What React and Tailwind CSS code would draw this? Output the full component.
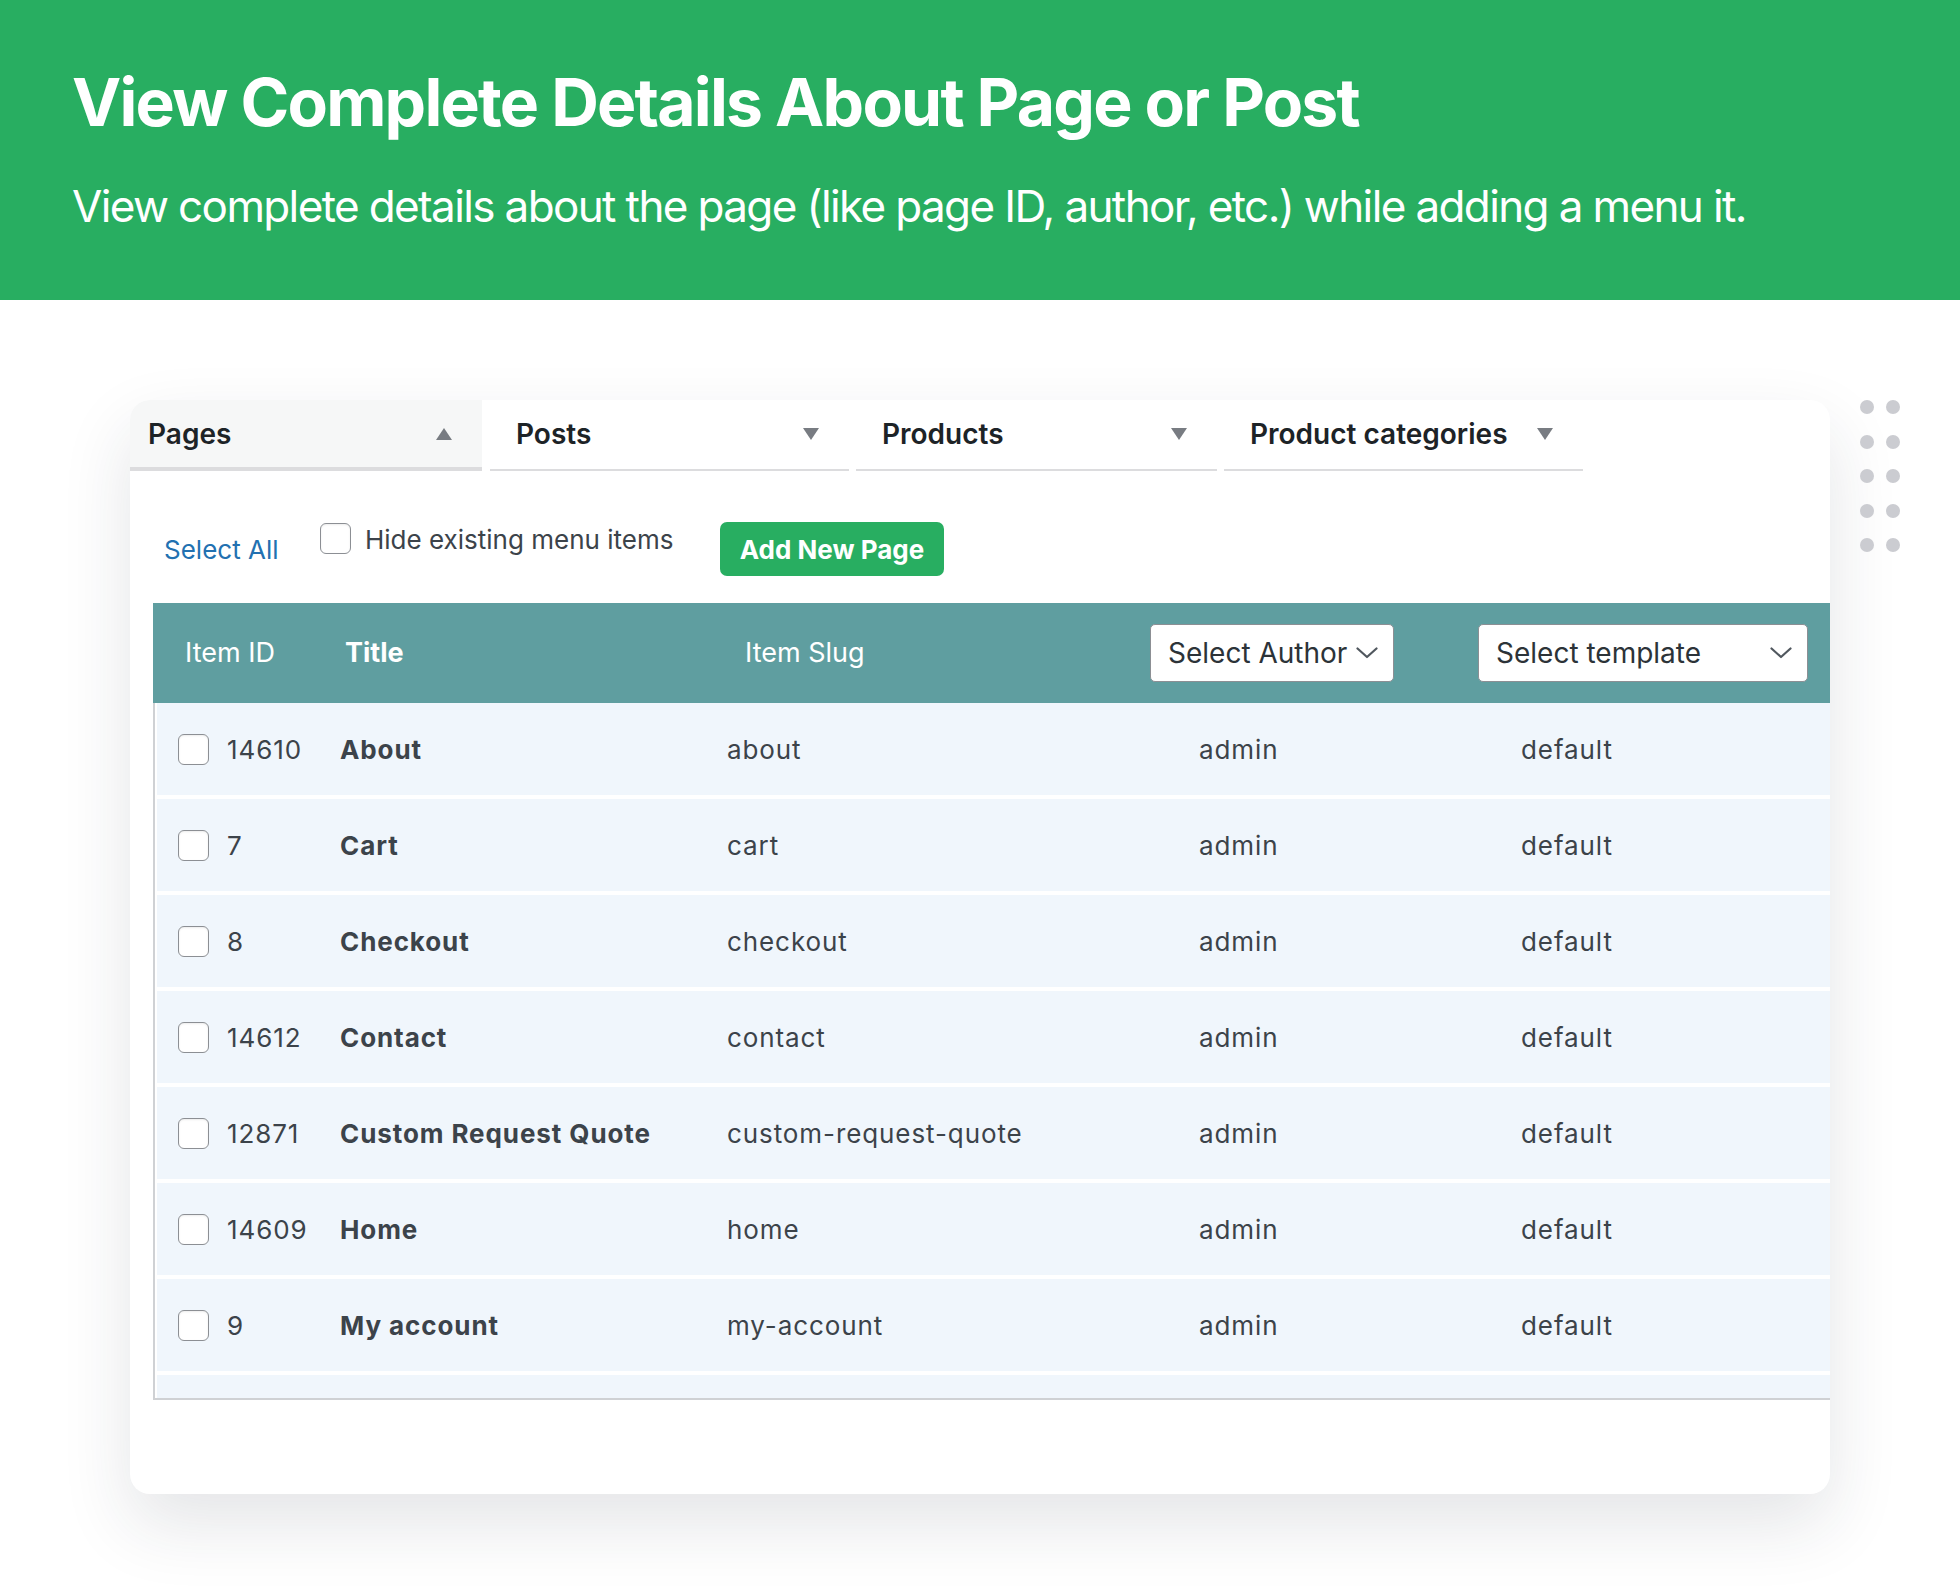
import React from 'react';

const tabs = [
  { label: 'Pages', open: true, width: 'w-[352px]' },
  { label: 'Posts', width: 'w-[359px] ml-[8px]' },
  { label: 'Products', width: 'w-[361px] ml-[7px]' },
  { label: 'Product categories', width: 'w-[359px] ml-[7px]' },
];

const pages = [
  { id: '14610', title: 'About', slug: 'about' },
  { id: '7', title: 'Cart', slug: 'cart' },
  { id: '8', title: 'Checkout', slug: 'checkout' },
  { id: '14612', title: 'Contact', slug: 'contact' },
  { id: '12871', title: 'Custom Request Quote', slug: 'custom-request-quote' },
  { id: '14609', title: 'Home', slug: 'home' },
  { id: '9', title: 'My account', slug: 'my-account' },
];

const Caret = ({ up }) => (
  <svg width="16" height="12" viewBox="0 0 16 12" className="shrink-0">
    <polygon points={up ? '8,0 16,12 0,12' : '0,0 16,0 8,12'} fill="#787c82" />
  </svg>
);

const Chevron = () => (
  <svg width="22" height="12" viewBox="0 0 22 12" fill="none" className="shrink-0">
    <polyline points="1.5,1.5 11,10 20.5,1.5" stroke="#50575e" strokeWidth="2.2" strokeLinecap="round" strokeLinejoin="round" />
  </svg>
);

const Checkbox = ({ className = '' }) => (
  <span className={`block w-[31px] h-[31px] shrink-0 rounded-[6px] border-[1.5px] border-[#8c8f94] bg-white shadow-[inset_0_1px_2px_rgba(0,0,0,0.08)] ${className}`} />
);

const Select = ({ label, className }) => (
  <div className={`h-[58px] flex items-center justify-between pl-[17px] pr-[15px] bg-white border border-[#8c8f94] rounded-[5px] text-[28px] text-[#2c3338] ${className}`}>
    <span>{label}</span>
    <Chevron />
  </div>
);

export default function App() {
  return (
    <div className="w-[1960px] min-h-[1594px] bg-white font-['Inter','Liberation_Sans',sans-serif]">
      <header className="h-[300px] bg-[#28ae61] pl-[72px] pt-[69px] text-white">
        <h1 className="text-[66px] leading-none font-bold tracking-[-0.027em]">
          View Complete Details About Page or Post
        </h1>
        <p className="mt-[49px] text-[44px] leading-none tracking-[-0.037em]">
          View complete details about the page (like page ID, author, etc.) while adding a menu it.
        </p>
      </header>

      <div className="flex items-start pl-[130px] pt-[100px] pb-[100px]">
        <section className="w-[1700px] h-[1094px] rounded-[20px] bg-white overflow-hidden shadow-[0_30px_70px_rgba(30,41,59,0.12)]">
          {/* accordion tabs */}
          <div className="flex">
            {tabs.map((t) => (
              <div
                key={t.label}
                className={`${t.width} h-[71px] flex items-center justify-between pr-[30px] ${
                  t.open
                    ? 'bg-[#f6f7f7] border-b-4 border-[#dcdcde] pl-[18px]'
                    : 'bg-white border-b-2 border-[#dcdcde] pl-[26px] pb-[2px]'
                }`}
              >
                <span className={`text-[28px] font-semibold text-[#1d2327] ${t.label === 'Product categories' ? 'flex-1' : ''}`}>{t.label}</span>
                <Caret up={t.open} />
              </div>
            ))}
          </div>

          {/* toolbar */}
          <div className="h-[132px] flex items-start pl-[34px]">
            <a className="w-[156px] mt-[66px] text-[26px] leading-none text-[#2271b1]">Select All</a>
            <label className="w-[400px] flex items-start">
              <Checkbox className="mt-[52px]" />
              <span className="ml-[14px] mt-[56px] text-[26px] leading-none text-[#3c434a]">Hide existing menu items</span>
            </label>
            <button className="mt-[51px] w-[224px] h-[54px] rounded-[7px] bg-[#28ae61] text-white text-[26px] font-bold">
              Add New Page
            </button>
          </div>

          {/* table */}
          <div className="ml-[23px]">
            <div className="h-[100px] flex items-center bg-[#5f9ea0] text-white text-[27px]">
              <span className="w-[192px] pl-[32px]">Item ID</span>
              <span className="w-[400px] font-bold">Title</span>
              <span className="w-[405px]">Item Slug</span>
              <Select label="Select Author" className="w-[244px]" />
              <Select label="Select template" className="w-[330px] ml-[84px]" />
            </div>
            <div className="border-l-2 border-b-2 border-[#cfd1d4] pl-[2px] bg-white">
              {pages.map((p) => (
                <div key={p.id} className="h-[96px] flex items-center pl-[21px] bg-[#f0f6fc] border-b-4 border-white text-[26px] tracking-[0.035em] text-[#3c434a]">
                  <Checkbox />
                  <span className="w-[113px] ml-[18px]">{p.id}</span>
                  <span className="w-[387px] font-bold">{p.title}</span>
                  <span className="w-[472px]">{p.slug}</span>
                  <span className="w-[322px]">admin</span>
                  <span>default</span>
                </div>
              ))}
              <div className="h-[23px] bg-[#f0f6fc]" />
            </div>
          </div>
        </section>

        {/* dotted decoration */}
        <div className="ml-[30px] grid grid-cols-2 gap-x-[12px] gap-y-[20.5px]">
          {Array.from({ length: 10 }).map((_, i) => (
            <span key={i} className="block w-[14px] h-[14px] rounded-full bg-[#cbccd1]" />
          ))}
        </div>
      </div>
    </div>
  );
}
